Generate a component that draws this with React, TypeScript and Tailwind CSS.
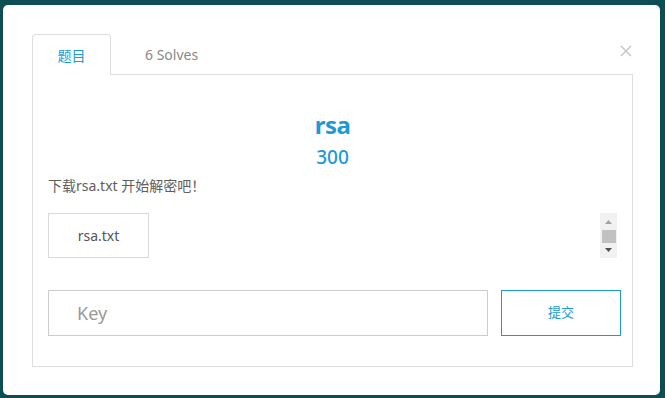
import { useState } from "react"

const font = { fontFamily: '"Noto Sans", "Noto Sans CJK SC", sans-serif' }

const ScrollBar = () => (
  <div className="flex h-full w-[17px] flex-col items-center bg-[#f1f1f1]">
    <svg width="17" height="17" viewBox="0 0 17 17" className="shrink-0">
      <polygon points="5,11 12,11 8.5,7" fill="#a3a3a3" />
    </svg>
    <div className="h-[13px] w-[14px] shrink-0 bg-[#c1c1c1]" />
    <svg width="17" height="15" viewBox="0 0 17 15" className="shrink-0">
      <polygon points="5,5 12,5 8.5,9" fill="#505050" />
    </svg>
  </div>
)

const App = () => {
  const [tab, setTab] = useState(0)
  const [key, setKey] = useState("")

  return (
    <div className="h-[398px] w-[665px] overflow-hidden bg-[#0b4f55] pl-[3px] pt-[5px]" style={font}>
      <div className="relative h-[390px] w-[657px] rounded-[5px] bg-white px-[29px] pt-[29px]">
        <button className="absolute right-[28px] top-[40px] text-[#c8c8c8]">
          <svg width="12" height="12" viewBox="0 0 12 12">
            <path d="M1 1 L11 11 M11 1 L1 11" stroke="currentColor" strokeWidth="1.6" />
          </svg>
        </button>

        <div className="flex h-[40px] w-[601px] items-stretch">
          <button
            onClick={() => setTab(0)}
            className="relative z-10 -mb-px h-[41px] w-[79px] rounded-t-[4px] border border-b-0 border-[#dddddd] bg-white text-[14px] text-[#1b9ad4]"
          >
            题目
          </button>
          <button onClick={() => setTab(1)} className="pl-[34px] text-[14px] text-[#888888]">
            6 Solves
          </button>
        </div>

        <div className="h-[293px] w-[601px] border border-[#dddddd] px-[15px] pt-[34px]">
          {tab === 0 && (
            <>
              <h2 className="text-center text-[24px] font-bold leading-[32px] tracking-[-0.5px] text-[#1b9ad4]">rsa</h2>
              <p className="mt-[2px] text-center text-[19px] font-medium leading-[28px] text-[#1b9ad4]">300</p>
              <p className="mt-[5px] text-[14px] leading-[20px] text-[#5e5e5e]">下载rsa.txt 开始解密吧！</p>

              <div className="mt-[17px] flex h-[45px] justify-between">
                <button className="h-[45px] w-[101px] border border-[#d9d9d9] text-[14px] text-[#555555]">
                  rsa.txt
                </button>
                <ScrollBar />
              </div>

              <div className="mt-[32px] flex w-[573px] gap-[13px]">
                <input
                  value={key}
                  onChange={(e) => setKey(e.target.value)}
                  placeholder="Key"
                  className="h-[46px] w-[441px] border border-[#cccccc] pl-[28px] text-[18px] text-[#555555] outline-none placeholder:text-[#999999]"
                />
                <button className="h-[46px] w-[120px] border border-[#1b9ad4] text-[13px] text-[#1b9ad4]">
                  提交
                </button>
              </div>
            </>
          )}
          {tab === 1 && <p className="text-[13px] text-[#555555]">6 Solves</p>}
        </div>
      </div>
    </div>
  )
}

export default App
